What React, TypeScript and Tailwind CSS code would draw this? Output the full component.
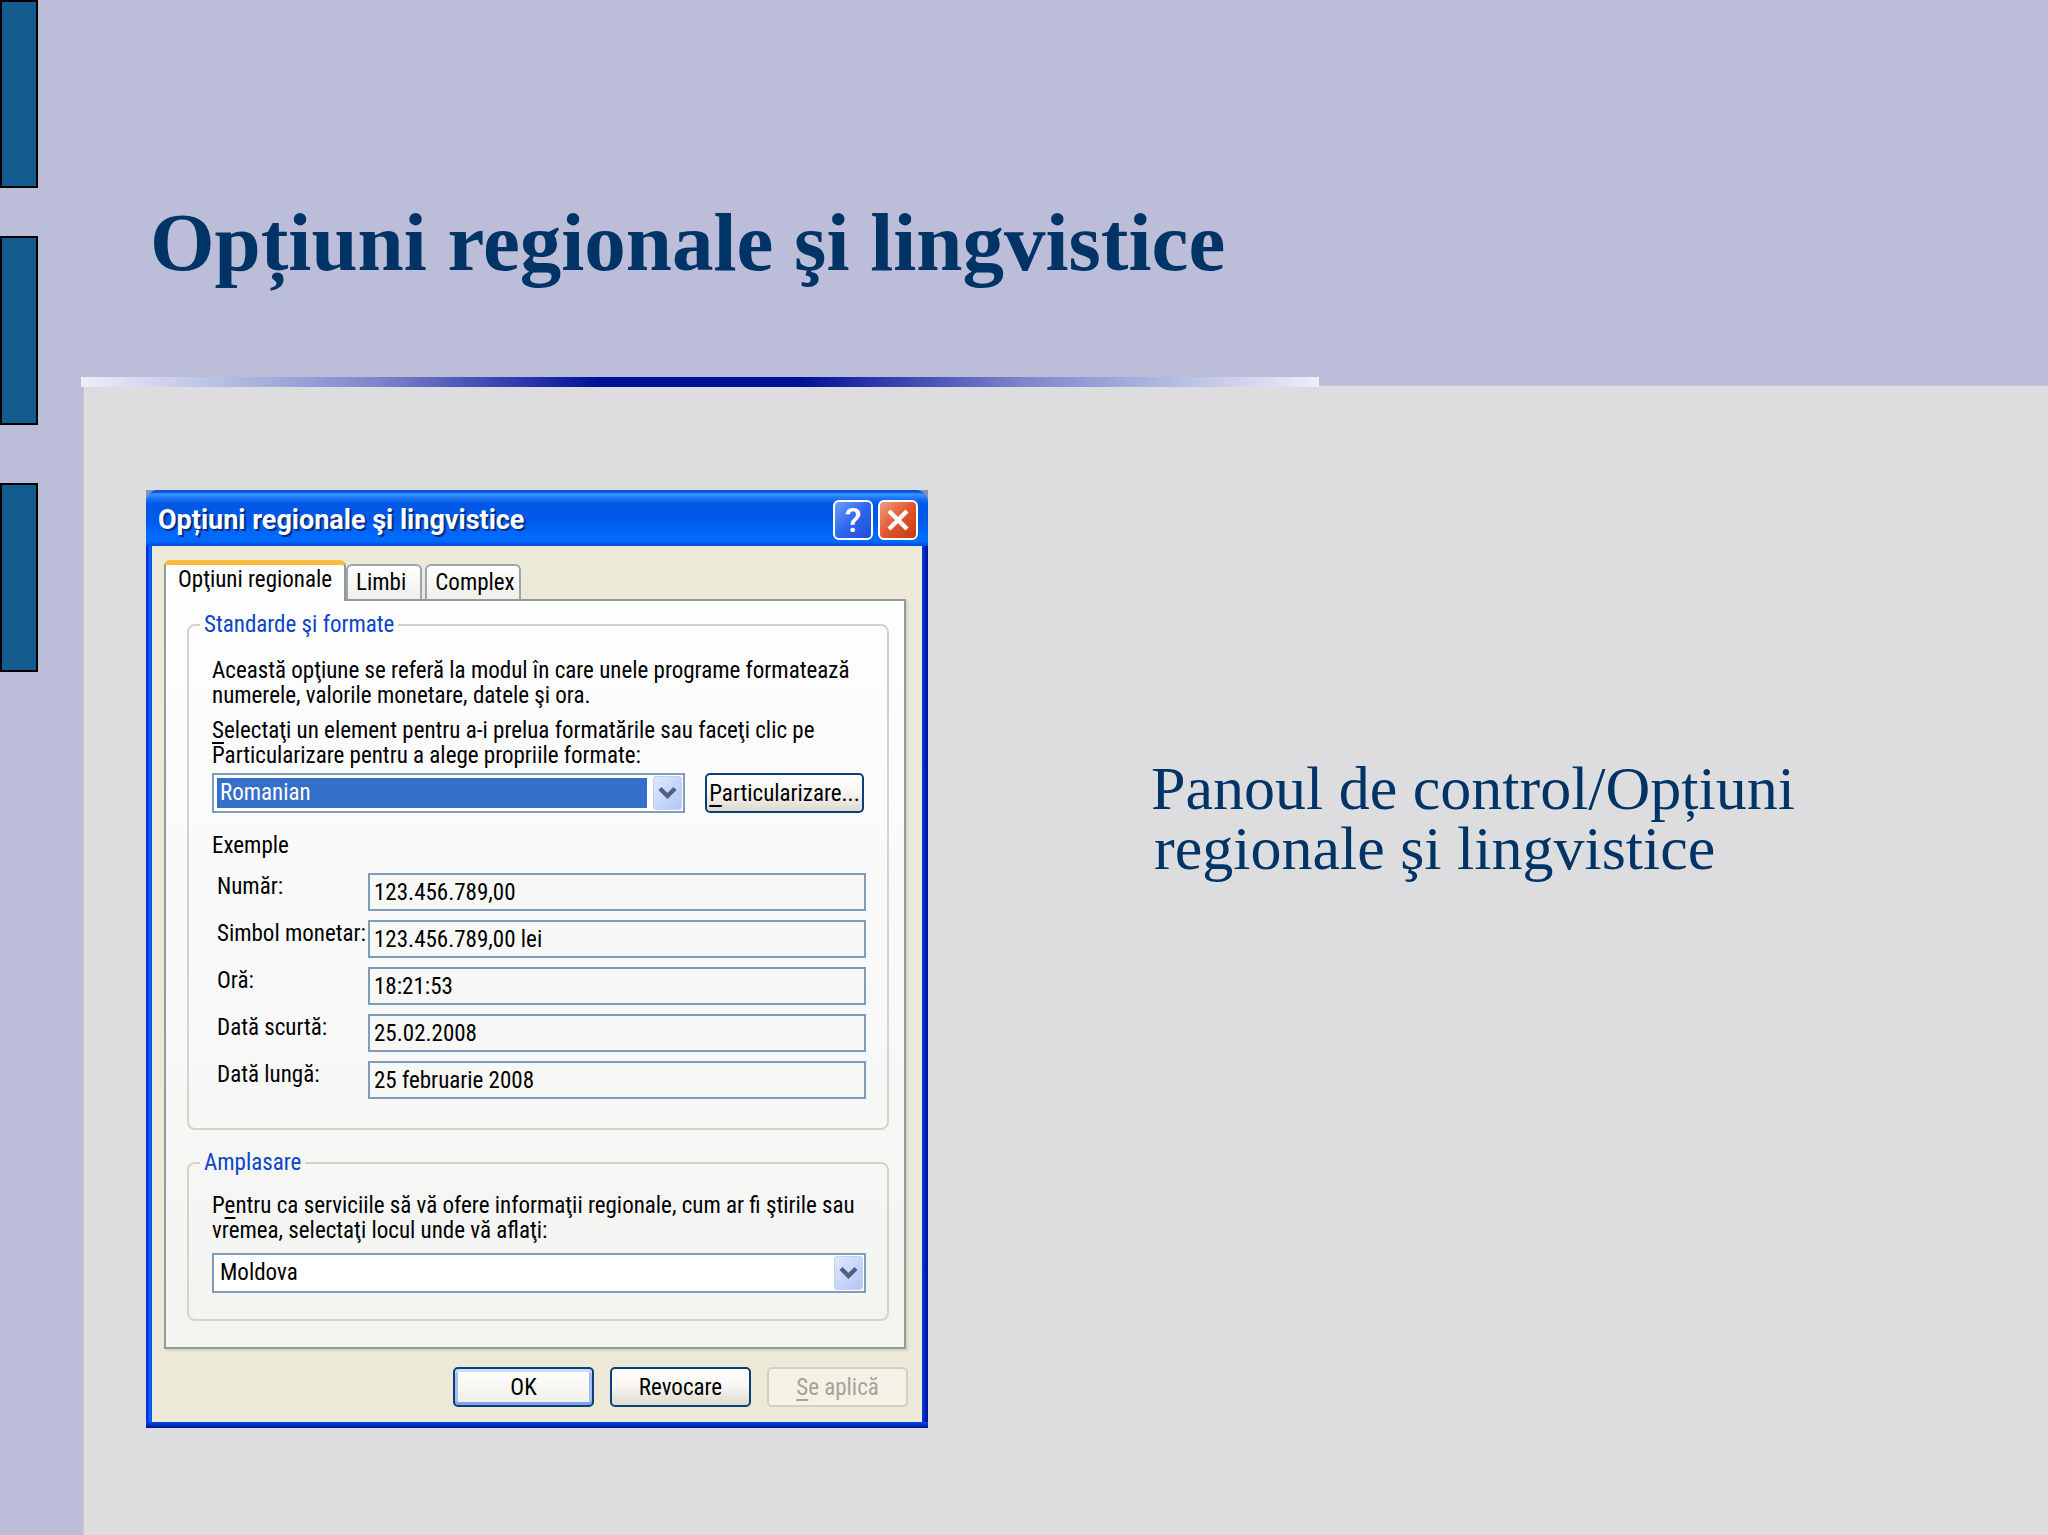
import { useId, type ReactNode } from "react";

function SideBars() {
  return (
    <div className="flex w-[83px] shrink-0 flex-col">
      <div className="h-[188px] w-[38px] border-2 border-black bg-[#125c90]" />
      <div className="mt-[48px] h-[189px] w-[38px] border-2 border-black bg-[#125c90]" />
      <div className="mt-[58px] h-[189px] w-[38px] border-2 border-black bg-[#125c90]" />
    </div>
  );
}

function Chevron() {
  return (
    <span className="flex h-[34px] w-[29px] shrink-0 items-center justify-center rounded-[3px] border border-[#c3d0f4] bg-linear-to-br from-[#dfe8fe] via-[#c8d6fb] to-[#b3c7f4]">
      <svg width="19" height="14" viewBox="0 0 19 14" aria-hidden="true">
        <path d="M2 2.5 L9.5 10 L17 2.5" fill="none" stroke="#4d6185" strokeWidth="4.4" />
      </svg>
    </span>
  );
}

function Combo({ id, value, selected, className }: { id: string; value: string; selected?: boolean; className: string }) {
  return (
    <div className={`flex h-10 items-center border-2 border-[#7f9db9] bg-white px-px ${className}`}>
      <select
        id={id}
        defaultValue={value}
        className={`ml-0.5 mr-1.5 h-[30px] min-w-0 flex-1 appearance-none pl-[3px] leading-[30px] outline-none ${
          selected ? "bg-[#3570c8] text-white" : "bg-white text-black"
        }`}
      >
        <option>{value}</option>
      </select>
      <Chevron />
    </div>
  );
}

function Group({ title, children, className }: { title: string; children: ReactNode; className: string }) {
  return (
    <fieldset className={`rounded-lg border-2 border-[#d3d3c8] pl-[23px] pr-[21px] ${className}`}>
      <legend className="-ml-3 px-1 leading-6 text-[#0a46c8]">{title}</legend>
      {children}
    </fieldset>
  );
}

function Example({ label, value }: { label: string; value: string }) {
  const id = useId();
  return (
    <div className="flex items-start">
      <label htmlFor={id} className="w-[151px] shrink-0 whitespace-nowrap leading-[27px]">
        {label}
      </label>
      <input
        id={id}
        readOnly
        defaultValue={value}
        className="h-[38px] min-w-0 flex-1 border-2 border-[#7f9db9] bg-[#f7f7f5] px-1 outline-none"
      />
    </div>
  );
}

const buttonBase = "h-10 rounded-[5px] border-2 pt-0.5 text-center leading-[34px]";
const buttonNormal = "border-[#0c3f75] bg-linear-to-b from-white via-[#f6f5f0] to-[#dedad0]";

const examples = [
  { label: "Număr:", value: "123.456.789,00" },
  { label: "Simbol monetar:", value: "123.456.789,00 lei" },
  { label: "Oră:", value: "18:21:53" },
  { label: "Dată scurtă:", value: "25.02.2008" },
  { label: "Dată lungă:", value: "25 februarie 2008" },
];

function Dialog() {
  return (
    <section className="w-[782px] shrink-0 bg-[#8594b4] font-['Roboto_Condensed','Roboto',sans-serif] text-[23px] text-black">
      <header className="flex h-14 items-center rounded-t-[12px] bg-[linear-gradient(180deg,#0a50d8_0,#0a50d8_2px,#3a95ff_4px,#1b70f5_9px,#0058e4_14px,#0059e8_30px,#0068fb_42px,#006bff_51px,#0049d4_56px)] pl-3 pr-2.5 pt-1">
        <h2 className="flex-1 font-['Roboto',sans-serif] text-[27px] font-bold leading-8 text-white [text-shadow:2px_2px_1px_#0a2a80]">
          Opțiuni regionale şi lingvistice
        </h2>
        <div className="flex gap-[5px]">
          <button
            type="button"
            aria-label="Ajutor"
            className="flex size-10 items-center justify-center rounded-md border-2 border-white bg-linear-to-br from-[#6f9cfb] via-[#2f66ee] to-[#1c4fd6]"
          >
            <span className="font-['Roboto',sans-serif] text-[34px] font-medium leading-9 text-white">?</span>
          </button>
          <button
            type="button"
            aria-label="Închide"
            className="flex size-10 items-center justify-center rounded-md border-2 border-white bg-linear-to-br from-[#f09a7c] via-[#e2562d] to-[#c53a10]"
          >
            <svg width="24" height="24" viewBox="0 0 24 24" aria-hidden="true">
              <path d="M3 3 L21 21 M21 3 L3 21" stroke="#fff" strokeWidth="4.4" />
            </svg>
          </button>
        </div>
      </header>

      <div className="bg-[linear-gradient(90deg,#0831d9_0,#0831d9_2px,#0a64f2_3px,#0a64f2_5px,#0841dd_6px,#0841dd_776px,#0038d8_777px,#0018b0_780px,#001598_782px)]">
        <div className="mx-1.5 bg-[#ece9d8] pb-[15px] pl-3 pr-3.5 pt-3.5">
          <div className="mr-0.5">
            <div role="tablist" className="relative flex h-[39px] items-end">
              <button
                type="button"
                role="tab"
                aria-selected="true"
                className="-mb-0.5 h-[41px] w-[182px] self-end rounded-t-md border-x-2 border-t-[5px] border-x-[#919b9c] border-t-[#f9bc3c] bg-[#fdfdfe] pb-1.5 leading-[30px]"
              >
                Opţiuni regionale
              </button>
              <button
                type="button"
                role="tab"
                aria-selected="false"
                className="h-[35px] w-[76px] rounded-t-md border-2 border-b-0 border-[#98a5b3] bg-linear-to-b from-white to-[#efeee8] pl-[8px] text-left leading-[34px]"
              >
                Limbi
              </button>
              <button
                type="button"
                role="tab"
                aria-selected="false"
                className="ml-[3px] h-[35px] w-24 rounded-t-md border-2 border-b-0 border-[#98a5b3] bg-linear-to-b from-white to-[#efeee8] pl-1 text-center leading-[34px]"
              >
                Complex
              </button>
            </div>

            <div
              role="tabpanel"
              className="border-2 border-[#919b9c] bg-linear-to-b from-[#fdfdfe] via-[#f9f9fa] to-[#f3f3ef] pb-[26px] pl-[21px] pr-[15px] pt-3 shadow-[2px_2px_2px_#d3d2c0]"
            >
              <Group title="Standarde şi formate" className="pb-[29px]">
                <p className="mt-[21px] whitespace-nowrap leading-[25px]">
                  Această opţiune se referă la modul în care unele programe formatează
                  <br />
                  numerele, valorile monetare, datele şi ora.
                </p>
                <label htmlFor="format" className="mt-2.5 block whitespace-nowrap leading-[25px]">
                  <u className="underline-offset-4">S</u>electaţi un element pentru a-i prelua formatările sau faceţi clic pe
                  <br />
                  Particularizare pentru a alege propriile formate:
                </label>
                <div className="mt-[5px] flex items-center gap-5">
                  <Combo id="format" value="Romanian" selected className="w-[473px]" />
                  <button type="button" className={`${buttonBase} ${buttonNormal} w-[159px]`}>
                    <u className="underline-offset-4">P</u>articularizare...
                  </button>
                </div>
                <h3 className="mt-5 leading-[25px]">Exemple</h3>
                <div className="mt-[15px] flex flex-col gap-[9px] pl-[5px]">
                  {examples.map((e) => (
                    <Example key={e.label} label={e.label} value={e.value} />
                  ))}
                </div>
              </Group>

              <Group title="Amplasare" className="mt-[21px] pb-[26px]">
                <label htmlFor="place" className="mt-[18px] block whitespace-nowrap leading-[25px]">
                  P<u className="underline-offset-4">e</u>ntru ca serviciile să vă ofere informaţii regionale, cum ar fi ştirile sau
                  <br />
                  vremea, selectaţi locul unde vă aflaţi:
                </label>
                <Combo id="place" value="Moldova" className="mt-2.5" />
              </Group>
            </div>
          </div>

          <div className="mt-[18px] flex justify-end gap-4">
            <button
              type="button"
              className={`${buttonBase} w-[141px] border-[#0c3f75] bg-linear-to-b from-white to-[#efede6] shadow-[inset_0_3px_0_#cbdffc,inset_0_-3px_0_#85a4e4,inset_3px_0_0_#a3bff0,inset_-3px_0_0_#a3bff0]`}
            >
              OK
            </button>
            <button type="button" className={`${buttonBase} ${buttonNormal} w-[141px]`}>
              Revocare
            </button>
            <button type="button" disabled className={`${buttonBase} w-[141px] border-[#d2d0be] bg-[#f4f2e6] text-[#a5a495]`}>
              <u className="underline-offset-4">S</u>e aplică
            </button>
          </div>
        </div>
        <div className="h-1.5 bg-linear-to-b from-[#0a4ae0] to-[#001590]" />
      </div>
    </section>
  );
}

export default function App() {
  return (
    <div className="flex min-h-screen bg-[#bcbdd9]">
      <SideBars />
      <div className="flex min-w-0 flex-1 flex-col">
        <header className="relative h-[385px] shrink-0 pl-[67px] pt-[194px]">
          <h1 className="whitespace-nowrap font-['Liberation_Serif',serif] text-[83px] font-bold leading-[96px] text-[#003366]">
            Opțiuni regionale şi lingvistice
          </h1>
          <div className="absolute -bottom-0.5 -left-0.5 h-2.5 w-[63%] bg-[linear-gradient(90deg,#eeeefa_0%,#b9c0e4_11%,#7f84cc_24%,#000f98_42%,#000f98_58%,#7f84cc_76%,#b9c0e4_89%,#eeeefa_100%)]" />
        </header>
        <main className="flex flex-1 items-start border-l border-t border-[#c6c6cc] bg-[#dddddf] pb-[106px] pl-[62px] pt-[104px]">
          <Dialog />
          <p className="ml-[226px] mt-[268px] -indent-[3px] whitespace-nowrap font-['Liberation_Serif',serif] text-[62px] leading-[60px] text-[#003366]">
            Panoul de control/Opțiuni
            <br />
            regionale şi lingvistice
          </p>
        </main>
      </div>
    </div>
  );
}
